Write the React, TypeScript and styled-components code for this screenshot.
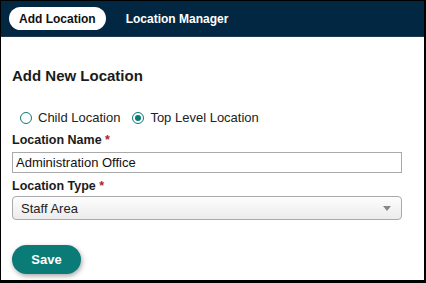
import styled, { createGlobalStyle } from 'styled-components';

const GlobalStyle = createGlobalStyle`
  html, body {
    margin: 0;
    padding: 0;
    background: #000;
  }
  body {
    font-family: 'Liberation Sans', Arial, sans-serif;
  }
`;

const Frame = styled.div`
  width: 426px;
  height: 283px;
  box-sizing: border-box;
  background: #000;
  padding: 1px 2px 3px 1px;
`;

const Panel = styled.div`
  height: 100%;
  background: #fff;
  display: flex;
  flex-direction: column;
`;

const NavBar = styled.nav`
  height: 35px;
  background: #022742;
  display: flex;
  align-items: center;
  gap: 20px;
  padding: 0 8px;
  border-bottom: 1px solid #1d3a52;
`;

const Tab = styled.div<{ active?: boolean }>`
  height: 23px;
  display: flex;
  align-items: center;
  padding: 0 ${(p) => (p.active ? '10px' : '0')};
  border-radius: 12px;
  font-size: 12px;
  font-weight: bold;
  background: ${(p) => (p.active ? '#fff' : 'transparent')};
  color: ${(p) => (p.active ? '#111' : '#fff')};
`;

const Body = styled.div`
  padding: 30px 22px 0 11px;
  display: flex;
  flex-direction: column;
`;

const Title = styled.h2`
  margin: 0;
  font-size: 15px;
  font-weight: bold;
  color: #1b1b1b;
`;

const RadioRow = styled.div`
  display: flex;
  gap: 12px;
  margin-top: 26px;
  padding-left: 8px;
`;

const RadioItem = styled.label`
  display: flex;
  align-items: center;
  gap: 6px;
  font-size: 13px;
  color: #222;
`;

const RadioDot = styled.span<{ checked?: boolean }>`
  width: 10px;
  height: 10px;
  border-radius: 50%;
  border: 1.5px solid #0c7a77;
  display: flex;
  align-items: center;
  justify-content: center;
  &::after {
    content: '';
    width: 6px;
    height: 6px;
    border-radius: 50%;
    background: ${(p) => (p.checked ? '#0c7a77' : 'transparent')};
  }
`;

const FieldLabel = styled.div<{ gap?: number }>`
  font-size: 12.5px;
  font-weight: bold;
  color: #1b1b1b;
  margin-top: ${(p) => p.gap ?? 6}px;
  & span {
    color: #b0232a;
  }
`;

const TextInput = styled.div`
  margin-top: 5px;
  height: 19px;
  border: 1px solid #a9a9a9;
  display: flex;
  align-items: center;
  padding: 0 3px;
  font-size: 13px;
  color: #111;
`;

const Select = styled.div`
  margin-top: 3px;
  height: 22px;
  border: 1px solid #aaa;
  border-radius: 4px;
  background: linear-gradient(#fdfdfd, #ececec);
  display: flex;
  align-items: center;
  justify-content: space-between;
  padding: 0 10px 0 8px;
  font-size: 13px;
  color: #222;
`;

const Arrow = styled.span`
  width: 0;
  height: 0;
  border-left: 4px solid transparent;
  border-right: 4px solid transparent;
  border-top: 5px solid #888;
`;

const SaveButton = styled.button`
  margin-top: 25px;
  width: 69px;
  height: 29px;
  border: none;
  border-radius: 15px;
  background: #0b7b78;
  color: #fff;
  font-family: inherit;
  font-size: 13px;
  font-weight: bold;
  box-shadow: 1px 2px 5px rgba(0, 0, 0, 0.35);
`;

export default function App() {
  return (
    <Frame>
      <GlobalStyle />
      <Panel>
        <NavBar>
          <Tab active>Add Location</Tab>
          <Tab>Location Manager</Tab>
        </NavBar>
        <Body>
          <Title>Add New Location</Title>
          <RadioRow>
            <RadioItem>
              <RadioDot />
              Child Location
            </RadioItem>
            <RadioItem>
              <RadioDot checked />
              Top Level Location
            </RadioItem>
          </RadioRow>
          <FieldLabel gap={8}>
            Location Name <span>*</span>
          </FieldLabel>
          <TextInput>Administration Office</TextInput>
          <FieldLabel>
            Location Type <span>*</span>
          </FieldLabel>
          <Select>
            Staff Area
            <Arrow />
          </Select>
          <div>
            <SaveButton>Save</SaveButton>
          </div>
        </Body>
      </Panel>
    </Frame>
  );
}
